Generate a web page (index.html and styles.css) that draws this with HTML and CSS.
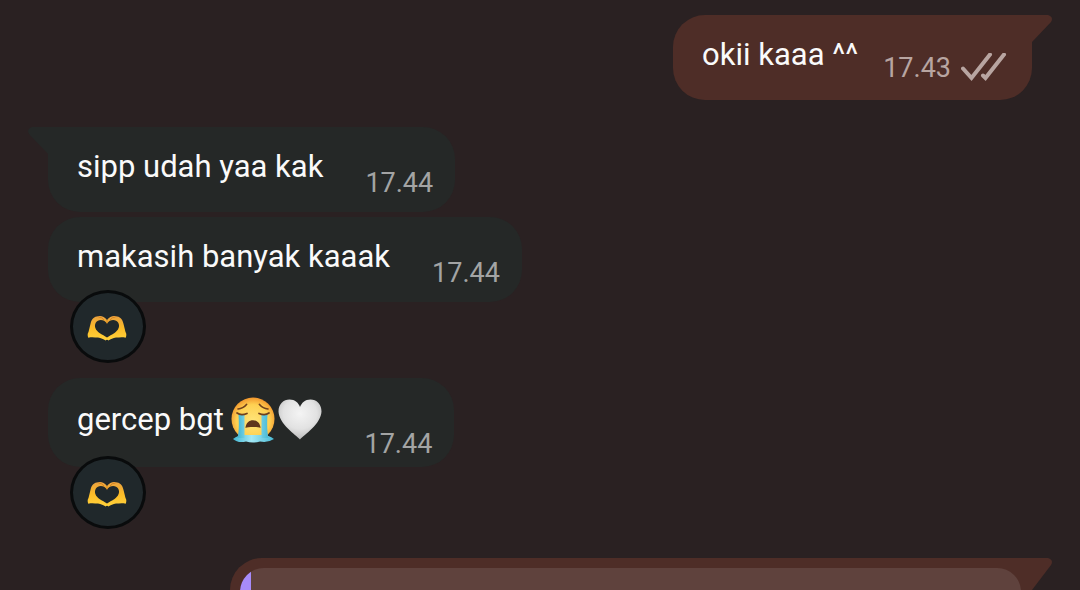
FILE: index.html
```html
<!DOCTYPE html>
<html lang="id">
<head>
<meta charset="utf-8">
<meta name="viewport" content="width=device-width, initial-scale=1">
<title>Chat</title>
<link rel="stylesheet" href="styles.css">
</head>
<body>
<svg class="defs" aria-hidden="true">
  <defs>
    <linearGradient id="gold" x1="0" y1="0" x2="0" y2="1"><stop offset="0" stop-color="#e9a140"/><stop offset=".5" stop-color="#fcbc27"/><stop offset="1" stop-color="#ffd23c"/></linearGradient>
    <radialGradient id="face" cx=".5" cy=".55" r=".55"><stop offset="0" stop-color="#ffe57a"/><stop offset=".7" stop-color="#fed052"/><stop offset="1" stop-color="#f2962c"/></radialGradient>
    <linearGradient id="tear" x1="0" y1="0" x2="1" y2="0"><stop offset="0" stop-color="#3fb5d2"/><stop offset=".45" stop-color="#a3e8f5"/><stop offset="1" stop-color="#48bad5"/></linearGradient>
    <radialGradient id="white" cx=".5" cy=".35" r=".65"><stop offset="0" stop-color="#f4f4f4"/><stop offset=".6" stop-color="#e2e2e2"/><stop offset="1" stop-color="#b9b9b9"/></radialGradient>
    <symbol id="hands" viewBox="0 0 40 26">
      <path fill="url(#gold)" d="M20 5C17.500 1.500 14 .5 11.500 1.200 7.500 1 4.500 4 3.600 8.500L1.500 17C.4 18.600.4 21 1.300 22.800 5 21.800 8 22.600 11 22.600 14 22.800 16.500 24.500 18.500 25.500Q20 24 21.500 25.500C23.500 24.500 26 22.800 29 22.600 32 22.600 35 21.800 38.700 22.800 39.600 21 39.600 18.600 38.500 17L36.400 8.500C35.500 4 32.500 1 28.500 1.200 26 .5 22.500 1.500 20 5Z"/>
      <path fill="#20282b" d="M20 8.500C17 4 11 4.200 8.900 7.500 6.500 11.500 9 15.500 12.500 18 15 19.800 18 21 20 22.600 22 21 25 19.800 27.500 18 31 15.500 33.500 11.500 31.100 7.500 29 4.200 23 4 20 8.500Z"/>
      <path fill="none" stroke="#cf7b19" stroke-width=".8" d="M20 5V8.500M11.500 2Q14.500 1.800 17 5M28.500 2Q25.500 1.800 23 5"/>
    </symbol>
    <symbol id="ticks" viewBox="0 0 46 30">
      <path fill="none" stroke="currentColor" stroke-width="4" stroke-linecap="round" d="M2 15.500 10.500 25 29 1.500M22 22.500 24.500 25 43 1.500"/>
    </symbol>
  </defs>
</svg>

<main class="chat">
  <article class="bubble out tailed">
    <svg class="tail" viewBox="0 0 40 28" aria-hidden="true"><path d="M0 0H36Q42 2 39 7L20 27H0Z"/></svg>
    <p class="text">okii kaaa ^^</p>
    <div class="meta"><time>17.43</time><svg class="ticks" role="img" aria-label="Terkirim"><use href="#ticks"/></svg></div>
  </article>

  <article class="bubble in tailed first">
    <svg class="tail" viewBox="0 0 40 28" aria-hidden="true"><path d="M40 0H4Q-2 2 1 7L20 27H40Z"/></svg>
    <p class="text">sipp udah yaa kak</p>
    <div class="meta"><time>17.44</time></div>
  </article>

  <article class="bubble in reacted">
    <p class="text">makasih banyak kaaak</p>
    <div class="meta"><time>17.44</time></div>
    <button class="reaction" aria-label="Reaksi tangan hati"><svg class="hands"><use href="#hands"/></svg></button>
  </article>

  <article class="bubble in with-emoji reacted">
    <p class="text">gercep bgt
      <span class="emojis">
        <svg class="emoji" viewBox="0 0 44 46" role="img" aria-label="menangis">
          <circle cx="22" cy="22" r="21.500" fill="url(#face)"/>
          <path fill="url(#tear)" d="M2 42Q7 38 13 38H31Q38 38 43 42 37 46 29 44.500 22 46.500 15 44.500 7 46.500 2 42Z"/>
          <path fill="url(#tear)" d="M7.500 17H13.500V41H6.500Q8.500 33 7.500 17ZM30.500 17H36.500Q35.500 33 37.500 41H30.500Z"/>
          <path fill="#60351b" d="M14.500 31C15 20.500 29 20.500 29.500 31 27 29.700 17 29.700 14.500 31Z"/>
          <g fill="none" stroke="#70401d" stroke-width="1.700" stroke-linecap="round"><path d="M6 16Q10 19 16 16.500M28 16.500Q34 19 38 16M7 12Q12 11.500 15.500 7.500M28.500 7.500Q32 11.500 37 12"/></g>
        </svg><svg class="emoji" viewBox="0 0 44 46" role="img" aria-label="hati putih"><path fill="url(#white)" d="M22 42.500C18 38 1 27 .5 14.500.5 7 5.500 2.500 11.500 2.500 17 2.500 20.500 6 22 10 23.500 6 27 2.500 32.500 2.500 38.500 2.500 43.500 7 43.500 14.500 43 27 26 38 22 42.500Z"/></svg>
      </span>
    </p>
    <div class="meta"><time>17.44</time></div>
    <button class="reaction" aria-label="Reaksi tangan hati"><svg class="hands"><use href="#hands"/></svg></button>
  </article>

  <article class="bubble out tailed reply">
    <svg class="tail" viewBox="0 0 40 28" aria-hidden="true"><path d="M0 0H36Q42 2 39 7L20 32H0Z"/></svg>
    <div class="quote"></div>
  </article>
</main>
</body>
</html>
```
FILE: styles.css
```css
* { box-sizing: border-box; }

body {
  margin: 0;
  background: #2a2122;
  color: #fafafa;
  font-family: Roboto, sans-serif;
}

.defs { position: absolute; width: 0; height: 0; }

.chat {
  display: flex;
  flex-direction: column;
  align-items: flex-start;
  height: 100vh;
  padding: 15px 48px 0;
  overflow: hidden;
}

.bubble {
  position: relative;
  display: flex;
  flex-shrink: 0;
  border-radius: 32px;
}

.in {
  gap: 42px;
  margin-bottom: 5px;
  padding: 20px 22px 13px 29px;
  background: #252827;
  color: #fafafa;
}

.out {
  align-self: flex-end;
  gap: 25px;
  padding: 20px 25px 16px 29px;
  background: #4e2d27;
}

.first { margin-top: 27px; }

.tail {
  position: absolute;
  top: 0;
  width: 40px;
  height: 28px;
  overflow: visible;
}

.out .tail { right: -20px; fill: #4e2d27; }
.in .tail { left: -20px; fill: #252827; }
.out.tailed { border-top-right-radius: 0; }
.in.tailed { border-top-left-radius: 0; }

.text {
  margin: 0 0 9px;
  font-size: 31px;
  line-height: 40px;
}

.in .text { margin-bottom: 12px; }

.meta {
  display: flex;
  align-items: center;
  align-self: flex-end;
  gap: 10px;
  color: #a3a4a4;
  font-size: 27px;
  line-height: 32px;
}

.out .meta { color: #b8a5a1; }

.ticks { width: 46px; height: 30px; }

.reacted { margin-bottom: 76px; }

.reaction {
  position: absolute;
  top: 73px;
  left: 22px;
  display: flex;
  align-items: center;
  justify-content: center;
  width: 76px;
  height: 73px;
  padding: 3px 2px 0 0;
  border: 3px solid #090b0c;
  border-radius: 50%;
  background: #20282b;
}

.hands { width: 40px; height: 26px; }

.with-emoji {
  margin-bottom: 91px;
  padding: 22px 22px 7px 29px;
}

.with-emoji .text { margin-bottom: 20px; }

.with-emoji .reaction { top: 78px; }

.emojis {
  display: inline-flex;
  gap: 3px;
  height: 40px;
  align-items: center;
  vertical-align: top;
}

.emoji { width: 44px; height: 46px; }

.reply {
  display: block;
  width: calc(100% - 182px);
  padding: 10px 11px 10px 10px;
}

.quote {
  position: relative;
  height: 120px;
  border-radius: 24px;
  background: linear-gradient(to right, #a78bfa 11px, #5f423d 11px);
}
```
